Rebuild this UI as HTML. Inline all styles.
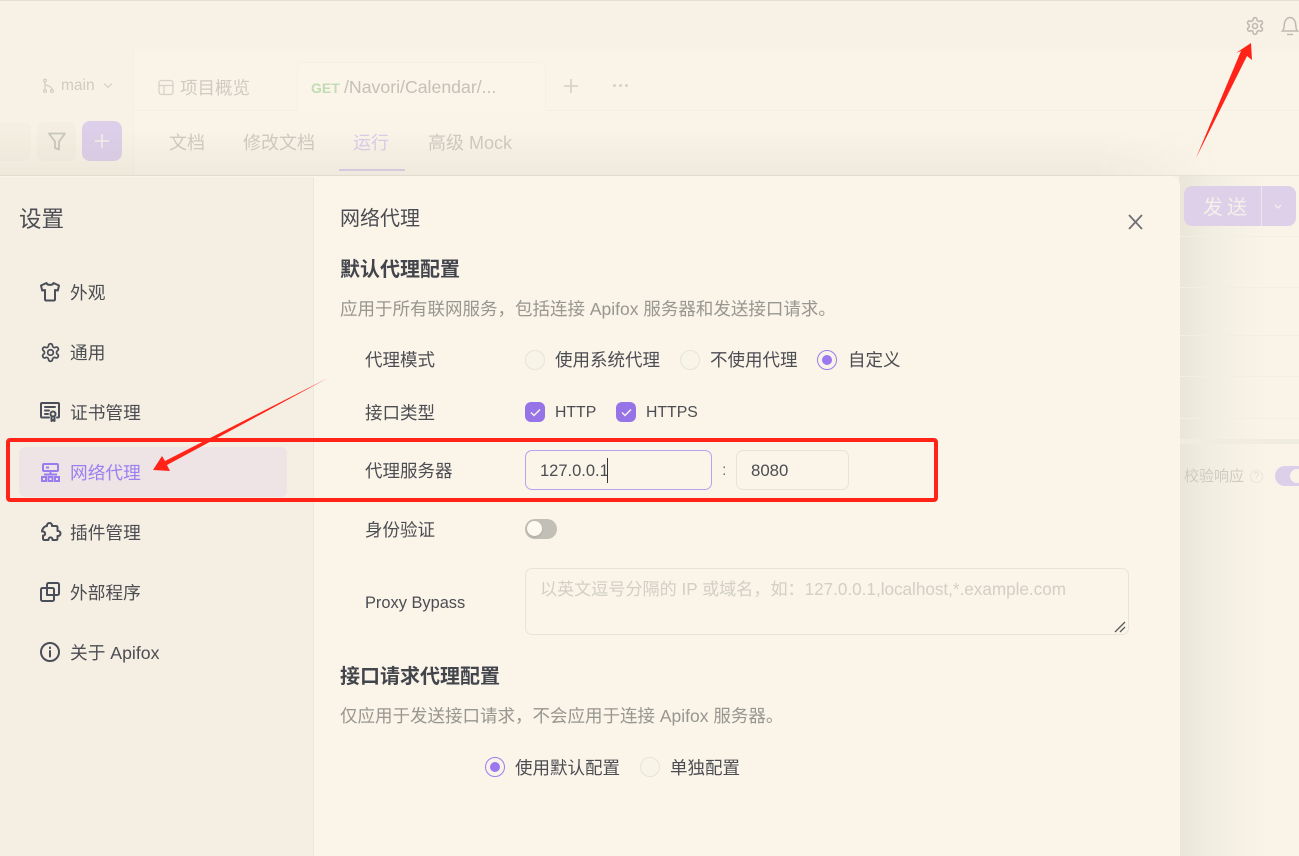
<!DOCTYPE html>
<html lang="zh"><head><meta charset="utf-8"><title>设置</title>
<style>
html,body{margin:0;padding:0}
body{width:1299px;height:856px;overflow:hidden;position:relative;background:#f8f2e6;font-family:"Liberation Sans","Noto Sans CJK SC",sans-serif;color:#4c4d52}
.t{position:absolute;white-space:nowrap;font-size:17.5px;line-height:24px}
.s{font-size:17.7px}
.a{position:absolute;box-sizing:border-box}
.g{color:#cfcbc1}
.r{position:absolute;box-sizing:border-box;width:20px;height:20px;border-radius:50%;border:1px solid #e6e3d9;background:#f9f4e8}
.r.on{border:1px solid #9d7cf0}
.r.on:after{content:"";position:absolute;left:4px;top:4px;width:10px;height:10px;border-radius:50%;background:#9b78ef}
.c{position:absolute;width:20px;height:20px;border-radius:6px;background:#9673e6}
svg{position:absolute;overflow:visible}
.ic{fill:none;stroke:#4a4e59;stroke-width:2;stroke-linecap:round;stroke-linejoin:round}
</style></head><body>
<div class="a" style="left:0;top:0;width:1299px;height:1px;background:#e4e0d6"></div>
<div class="a" style="left:0;top:51px;width:1299px;height:125px;background:#f9f3e8"></div>
<div class="a" style="left:0;top:51px;width:133px;height:125px;background:#f8f2e6"></div>
<div class="a" style="left:133px;top:51px;width:1px;height:125px;background:#f3eee2"></div>
<svg style="left:42px;top:78px" width="16" height="16" viewBox="0 0 16 16" fill="none" stroke="#d3cfc5" stroke-width="1.3"><circle cx="3" cy="2.500" r="1.400"/><circle cx="3" cy="13" r="1.400"/><circle cx="10" cy="13" r="1.400"/><path d="M3 4v7.500M3 6c0 2 6 1 7 5.500"/></svg>
<div class="t g" style="left:61px;top:74px;font-size:15.500px">main</div>
<svg style="left:103px;top:82px" width="10" height="7" fill="none" stroke="#d3cfc5" stroke-width="1.200"><path d="M1 1.500l4 4 4-4"/></svg>
<svg style="left:158px;top:79px" width="16" height="18" fill="none" stroke="#d6d2c8" stroke-width="1.300"><rect x="1" y="1.500" width="14" height="14" rx="2.500"/><path d="M1 6.500h14M6 6.500v9"/></svg>
<div class="t g" style="left:180px;top:76px;font-size:17.500px">项目概览</div>
<div class="a" style="left:297px;top:62px;width:249px;height:49px;background:#faf4e9;border:1px solid #f5f0e4;border-bottom:0;border-radius:7px 7px 0 0"></div>
<div class="a" style="left:134px;top:110px;width:163px;height:1px;background:#f4efe3"></div>
<div class="a" style="left:546px;top:110px;width:753px;height:1px;background:#f4efe3"></div>
<div class="t" style="left:311px;top:76px;font-size:14px;font-weight:bold;color:#c2dcb4">GET</div>
<div class="t" style="left:344px;top:75px;font-size:17.700px;color:#c4c1b8">/Navori/Calendar/...</div>
<svg style="left:563px;top:78px" width="16" height="16" fill="none" stroke="#d8d4ca" stroke-width="1.800"><path d="M8 1v14M1 8h14"/></svg>
<div class="a" style="left:613px;top:84px;width:3px;height:3px;border-radius:50%;background:#d6d2c8;box-shadow:6px 0 #d6d2c8,12px 0 #d6d2c8"></div>
<div class="a" style="left:0;top:122px;width:31px;height:39px;background:#f5efe3;border-radius:0 7px 7px 0"></div>
<div class="a" style="left:37px;top:122px;width:39px;height:39px;background:#f4eee2;border-radius:7px"></div>
<svg style="left:47px;top:132px" width="20" height="20" fill="none" stroke="#c9c6bc" stroke-width="1.800" stroke-linejoin="round"><path d="M2 1.500h16l-6 8v8l-4-1.500V9.500z"/></svg>
<div class="a" style="left:82px;top:121px;width:40px;height:40px;background:#ddcfe9;border-radius:8px"></div>
<svg style="left:94px;top:133px" width="16" height="16" fill="none" stroke="#f5efe7" stroke-width="1.600"><path d="M8 1v14M1 8h14"/></svg>
<div class="t g" style="left:169px;top:131px;font-size:18px">文档</div>
<div class="t g" style="left:243px;top:131px;font-size:18px">修改文档</div>
<div class="t" style="left:353px;top:131px;font-size:18px;color:#dacdea">运行</div>
<div class="t g" style="left:428px;top:131px;font-size:18px">高级 Mock</div>
<div class="a" style="left:339px;top:169px;width:66px;height:2px;background:#dacfe8"></div>
<div class="a" style="left:0;top:175px;width:1299px;height:1px;background:#e8e4d9"></div>
<div class="a" style="left:0;top:130px;width:1220px;height:46px;background:linear-gradient(rgba(120,115,90,0),rgba(120,115,90,.07));-webkit-mask-image:linear-gradient(90deg,#000 90%,transparent)"></div>
<svg style="left:1245px;top:16px" width="20" height="20" viewBox="0 0 24 24" fill="none" stroke="#bdbab1" stroke-width="1.900" stroke-linejoin="round"><path d="M12.220 2h-.44a2 2 0 0 0-2 2v.18a2 2 0 0 1-1 1.730l-.43.250a2 2 0 0 1-2 0l-.15-.08a2 2 0 0 0-2.730.730l-.22.380a2 2 0 0 0 .730 2.730l.150.100a2 2 0 0 1 1 1.720v.510a2 2 0 0 1-1 1.740l-.15.090a2 2 0 0 0-.730 2.730l.220.380a2 2 0 0 0 2.730.730l.150-.08a2 2 0 0 1 2 0l.430.250a2 2 0 0 1 1 1.730V20a2 2 0 0 0 2 2h.440a2 2 0 0 0 2-2v-.18a2 2 0 0 1 1-1.730l.430-.25a2 2 0 0 1 2 0l.150.080a2 2 0 0 0 2.730-.730l.220-.39a2 2 0 0 0-.730-2.730l-.15-.08a2 2 0 0 1-1-1.740v-.5a2 2 0 0 1 1-1.740l.150-.09a2 2 0 0 0 .730-2.730l-.22-.38a2 2 0 0 0-2.730-.730l-.15.080a2 2 0 0 1-2 0l-.43-.25a2 2 0 0 1-1-1.730V4a2 2 0 0 0-2-2z"/><circle cx="12" cy="12" r="3"/></svg>
<svg style="left:1281px;top:16px" width="18" height="20" fill="none" stroke="#bdbab1" stroke-width="1.500"><path d="M1.500 15c2-2 1.500-5 2-8 .5-3 3-5.500 5.500-5.500s5 2.500 5.500 5.500c.5 3 0 6 2 8zM6 18.500h6"/></svg>
<div class="a" style="left:1179px;top:176px;width:120px;height:680px;background:linear-gradient(90deg,#e9e6d9 0,#f0ece0 25px,#f5f0e4 50px,#f9f3e8 90px)"></div>
<div class="a" style="left:1184px;top:186px;width:112px;height:40px;background:#ded0e9;border-radius:8px"></div>
<div class="a" style="left:1261px;top:186px;width:1px;height:40px;background:#efe7ee"></div>
<div class="t" style="left:1203px;top:196px;font-size:20px;letter-spacing:4px;color:#f6f0ea">发送</div>
<svg style="left:1274px;top:204px" width="10" height="7" fill="none" stroke="#f6f0ea" stroke-width="1.300"><path d="M1 1l3 3 3-3"/></svg>
<div class="a" style="left:1179px;top:236px;width:120px;height:1px;background:#f3eee2"></div>
<div class="a" style="left:1179px;top:287px;width:120px;height:1px;background:#f3eee2"></div>
<div class="a" style="left:1179px;top:335px;width:120px;height:1px;background:#f3eee2"></div>
<div class="a" style="left:1179px;top:376px;width:120px;height:1px;background:#f3eee2"></div>
<div class="a" style="left:1179px;top:418px;width:120px;height:1px;background:#f3eee2"></div>
<div class="a" style="left:1179px;top:439px;width:120px;height:5px;background:#f1ece0"></div>
<div class="t g" style="left:1184px;top:465px;font-size:15px">校验响应</div>
<div class="a" style="left:1250px;top:470px;width:13px;height:13px;border:1px solid #e9e5da;border-radius:50%;font-size:10px;line-height:11px;text-align:center;color:#e3dfd4">?</div>
<div class="a" style="left:1275px;top:466px;width:34px;height:20px;background:#dccfe9;border-radius:10px"></div>
<div class="a" style="left:1290px;top:469px;width:14px;height:14px;background:#f9f3e8;border-radius:50%"></div>

<div class="a" style="left:0;top:176px;width:1179.500px;height:680px;background:#faf4e9;border-radius:0 9px 0 0;box-shadow:0 0 1px #e4e0d4"></div>
<div class="a" style="left:0;top:177px;width:314px;height:679px;background:#f5efe3;border-right:1px solid #ede8dc"></div>
<div class="t" style="left:19px;top:205px;font-size:22.500px;line-height:30px">设置</div>

<svg class="ic" style="left:40px;top:282px" width="20" height="20"><path d="M6.500 1L1 3.500l1.200 5 2.800-.5v9.500c0 .5.500 1 1 1h8c.5 0 1-.5 1-1V8l2.800.5 1.200-5L13.500 1c-.5 2.500-6.500 2.500-7 0z"/></svg>
<div class="t s" style="left:70px;top:281px">外观</div>
<svg class="ic" style="left:39.500px;top:341.500px" width="21" height="21" viewBox="0 0 24 24" stroke-width="2.200"><path d="M12.220 2h-.44a2 2 0 0 0-2 2v.18a2 2 0 0 1-1 1.730l-.43.250a2 2 0 0 1-2 0l-.15-.08a2 2 0 0 0-2.730.730l-.22.380a2 2 0 0 0 .730 2.730l.150.100a2 2 0 0 1 1 1.720v.510a2 2 0 0 1-1 1.740l-.15.090a2 2 0 0 0-.730 2.730l.220.380a2 2 0 0 0 2.730.730l.150-.08a2 2 0 0 1 2 0l.430.250a2 2 0 0 1 1 1.730V20a2 2 0 0 0 2 2h.440a2 2 0 0 0 2-2v-.18a2 2 0 0 1 1-1.730l.430-.25a2 2 0 0 1 2 0l.150.080a2 2 0 0 0 2.730-.730l.220-.39a2 2 0 0 0-.730-2.730l-.15-.08a2 2 0 0 1-1-1.740v-.5a2 2 0 0 1 1-1.740l.150-.09a2 2 0 0 0 .730-2.730l-.22-.38a2 2 0 0 0-2.730-.730l-.15.080a2 2 0 0 1-2 0l-.43-.25a2 2 0 0 1-1-1.730V4a2 2 0 0 0-2-2z"/><circle cx="12" cy="12" r="3.200"/></svg>
<div class="t s" style="left:70px;top:341px">通用</div>
<svg class="ic" style="left:40px;top:402px" width="20" height="20"><path d="M9 15.500H2a1 1 0 0 1-1-1V2a1 1 0 0 1 1-1h16a1 1 0 0 1 1 1v12.500a1 1 0 0 1-1 1h-1M5 5h10M5 8.500h4M5 12h3"/><circle cx="13" cy="12" r="2.500"/><path d="M11.500 14.500V19l1.500-1 1.500 1v-4.500"/></svg>
<div class="t s" style="left:70px;top:401px">证书管理</div>

<div class="a" style="left:19px;top:447px;width:268px;height:50px;background:#eee4e6;border-radius:6px"></div>
<svg style="left:41px;top:463px" width="19" height="19" fill="none" stroke="#9a7cee" stroke-width="2"><rect x="2" y="1" width="15" height="7" rx="1"/><path d="M5 4.500h3M9.500 8v3.500M3 11.500h13"/><rect x="1" y="14" width="4" height="4"/><rect x="7.500" y="14" width="4" height="4"/><rect x="14" y="14" width="4" height="4"/></svg>
<div class="t s" style="left:70px;top:461px;color:#9b7ff0">网络代理</div>

<svg class="ic" style="left:40px;top:522px" width="20" height="20"><path d="M7 4c-.5-4 5.500-4 5 0h4c1 0 1.500.5 1.500 1.500V9c4-.5 4 5.500 0 5v2.500c0 1-.5 1.500-1.500 1.500h-3.500c.5-3.500-4.500-3.500-4 0H4.500c-1 0-1.500-.5-1.500-1.500V13.500c3 .5 3-4.500-1-4 0-2 2-5.500 5-5.500z"/></svg>
<div class="t s" style="left:70px;top:521px">插件管理</div>
<svg class="ic" style="left:40px;top:582px" width="20" height="20"><path d="M7 5V2.500C7 1.700 7.700 1 8.500 1h9c.8 0 1.500.7 1.500 1.500v9c0 .8-.7 1.500-1.500 1.500H15"/><rect x="1" y="6" width="13" height="13" rx="1.500"/><path d="M7 6v7h7"/></svg>
<div class="t s" style="left:70px;top:581px">外部程序</div>
<svg class="ic" style="left:40px;top:642px" width="20" height="20"><circle cx="10" cy="10" r="9"/><path d="M10 9v5.500"/><path d="M10 5.500v.6"/></svg>
<div class="t s" style="left:70px;top:641px">关于 Apifox</div>

<div class="t" style="left:340px;top:206px;font-size:20px;line-height:26px">网络代理</div>
<svg style="left:1128px;top:214px" width="14" height="14" fill="none" stroke="#6f7176" stroke-width="1.800"><path d="M1 1l13 14M14 1L1 15"/></svg>
<div class="t" style="left:340px;top:257px;font-size:20px;line-height:26px;font-weight:bold;color:#43454c">默认代理配置</div>
<div class="t" style="left:340px;top:297px;font-size:17.500px;color:#97968f">应用于所有联网服务，包括连接 Apifox 服务器和发送接口请求。</div>

<div class="t" style="left:365px;top:348px">代理模式</div>
<div class="r" style="left:525px;top:350px"></div>
<div class="t" style="left:555px;top:348px">使用系统代理</div>
<div class="r" style="left:680px;top:350px"></div>
<div class="t" style="left:710px;top:348px">不使用代理</div>
<div class="r on" style="left:817px;top:350px"></div>
<div class="t" style="left:848px;top:348px">自定义</div>

<div class="t" style="left:365px;top:401px">接口类型</div>
<div class="c" style="left:525px;top:402px"></div>
<svg style="left:530px;top:408px" width="11" height="9" fill="none" stroke="#f5f0ea" stroke-width="1.500"><path d="M1 4.500l3 3L10 1.500"/></svg>
<div class="t" style="left:555px;top:401px;font-size:15.800px">HTTP</div>
<div class="c" style="left:616px;top:402px"></div>
<svg style="left:621px;top:408px" width="11" height="9" fill="none" stroke="#f5f0ea" stroke-width="1.500"><path d="M1 4.500l3 3L10 1.500"/></svg>
<div class="t" style="left:646px;top:401px;font-size:15.800px">HTTPS</div>

<div class="t" style="left:365px;top:459px">代理服务器</div>
<div class="a" style="left:525px;top:450px;width:187px;height:40px;border:1px solid #b9a1f2;border-radius:7px;background:#faf4e9"></div>
<div class="t" style="left:540px;top:459px;font-size:16.500px">127.0.0.1</div>
<div class="a" style="left:607px;top:458px;width:1px;height:25px;background:#33343a"></div>
<div class="t" style="left:722px;top:459px;font-size:16px;color:#76767a">:</div>
<div class="a" style="left:736px;top:450px;width:113px;height:40px;border:1px solid #e6e3d9;border-radius:7px"></div>
<div class="t" style="left:751px;top:459px;font-size:16.800px">8080</div>

<div class="t" style="left:365px;top:518px">身份验证</div>
<div class="a" style="left:525px;top:519px;width:32px;height:20px;border-radius:10px;background:#c1bfb6"></div>
<div class="a" style="left:527px;top:521px;width:15px;height:15px;border-radius:50%;background:#fdf9f1;box-shadow:0 1px 2px #aaa89f"></div>

<div class="t" style="left:365px;top:591px;font-size:16.400px">Proxy Bypass</div>
<div class="a" style="left:525px;top:568px;width:604px;height:67px;border:1px solid #e6e3d9;border-radius:7px"></div>
<div class="t" style="left:540px;top:578px;font-size:17.100px;color:#d2cfc5">以英文逗号分隔的 IP 或域名，如：127.0.0.1,localhost,*.example.com</div>
<svg style="left:1114px;top:621px" width="12" height="12" fill="none" stroke="#5a5a58" stroke-width="1.300"><path d="M1 11L11 1M6 11l5-5"/></svg>

<div class="t" style="left:340px;top:664px;font-size:20px;line-height:26px;font-weight:bold;color:#43454c">接口请求代理配置</div>
<div class="t" style="left:340px;top:704px;font-size:17.500px;color:#97968f">仅应用于发送接口请求，不会应用于连接 Apifox 服务器。</div>
<div class="r on" style="left:485px;top:757px"></div>
<div class="t" style="left:515px;top:756px">使用默认配置</div>
<div class="r" style="left:640px;top:757px"></div>
<div class="t" style="left:670px;top:756px">单独配置</div>

<div class="a" style="left:6px;top:438px;width:932px;height:64px;border:4px solid #ff2417;border-radius:4px"></div>
<svg style="left:0;top:0" width="1299" height="856"><path d="M1251 43L1252 60 1247 56 1196 158 1241 51 1236 53z" fill="#ff2417"/><path d="M328 378L167 465 170 471 153 470 162 456 165 461z" fill="#ff2417"/></svg>
</body></html>
